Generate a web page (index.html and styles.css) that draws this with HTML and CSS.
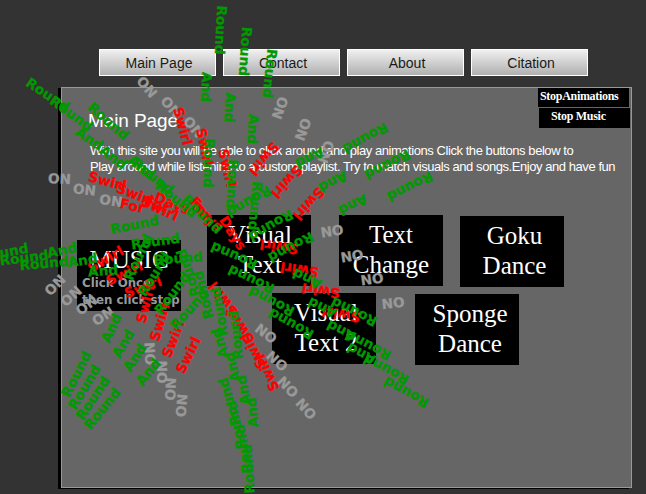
FILE: index.html
```html
<!DOCTYPE html>
<html lang="en">
<head>
<meta charset="utf-8">
<title>Main Page</title>
<link rel="stylesheet" href="styles.css">
</head>
<body>
<nav class="nav">
  <a>Main Page</a><a>Contact</a><a>About</a><a>Citation</a>
</nav>
<main class="panel">
  <div class="stops"><div class="stop">StopAnimations</div><div class="stop music-stop">Stop Music</div></div>
  <h1>Main Page</h1>
  <p class="intro"><span class="l1">With this site you will be able to click around and play animations Click the buttons below to</span><br><span class="l2">Play around while listening to a custom playlist. Try to match visuals and songs.Enjoy and have fun</span></p>
  <div class="tiles">
    <div class="tile music"><div class="label">MUSIC</div><div class="hint">Click Once<br>then click stop</div></div>
    <div class="grid">
      <div class="row">
        <div class="tile visual">Visual<br>Text</div>
        <div class="tile change">Text<br>Change</div>
        <div class="tile goku">Goku<br>Dance</div>
      </div>
      <div class="row second">
        <div class="tile visual-two">Visual<br>Text 2</div>
        <div class="tile sponge">Sponge<br>Dance</div>
      </div>
    </div>
  </div>
</main>
<svg class="words" width="646" height="494" viewBox="0 0 646 494">
<g class="on">
<text transform="translate(147 87) rotate(50)">ON</text>
<text transform="translate(171 107) rotate(50)">ON</text>
<text transform="translate(193.5 127) rotate(50)">ON</text>
<text transform="translate(280 108) rotate(110)">ON</text>
<text transform="translate(303 129.5) rotate(110)">ON</text>
<text transform="translate(326 152) rotate(110)">ON</text>
<text transform="translate(59.5 178.5) rotate(3)">ON</text>
<text transform="translate(84.5 189.5) rotate(6)">ON</text>
<text transform="translate(111 200.5) rotate(8)">ON</text>
<text transform="translate(55 285) rotate(-45)">ON</text>
<text transform="translate(71 296) rotate(-42)">ON</text>
<text transform="translate(86.5 305) rotate(-37)">ON</text>
<text transform="translate(103 316) rotate(-33)">ON</text>
<text transform="translate(150 353.5) rotate(-93)">ON</text>
<text transform="translate(161.5 372) rotate(-90)">ON</text>
<text transform="translate(170.5 389) rotate(-87)">ON</text>
<text transform="translate(181.5 405.5) rotate(-85)">ON</text>
<text transform="translate(266 333.5) rotate(217)">ON</text>
<text transform="translate(277 361) rotate(222)">ON</text>
<text transform="translate(288 387) rotate(227)">ON</text>
<text transform="translate(306 409) rotate(228)">ON</text>
<text transform="translate(332 231) rotate(171)">ON</text>
<text transform="translate(352 256) rotate(171)">ON</text>
<text transform="translate(372 279) rotate(172)">ON</text>
<text transform="translate(393 303) rotate(174)">ON</text>
</g>
<g class="swirl">
<text transform="translate(107.5 181) rotate(15)">Swirl</text>
<text transform="translate(135 194) rotate(21)">Swirl</text>
<text transform="translate(160 208.5) rotate(25)">Swirl</text>
<text transform="translate(132.5 205.5) rotate(12)">For</text>
<text transform="translate(157 204) rotate(20)">For</text>
<text transform="translate(172.5 203) rotate(22)">Days</text>
<text transform="translate(201 208) rotate(50)">For</text>
<text transform="translate(207 216) rotate(42)">Days</text>
<text transform="translate(233 233) rotate(57)">Days</text>
<text transform="translate(183 126) rotate(75)">Swirl</text>
<text transform="translate(205 147) rotate(78)">Swirl</text>
<text transform="translate(227.5 168) rotate(77)">Swirl</text>
<text transform="translate(264 159) rotate(130)">Swirl</text>
<text transform="translate(287 182) rotate(132)">Swirl</text>
<text transform="translate(309 204) rotate(132)">Swirl</text>
<text transform="translate(279 247) rotate(188)">Swirl</text>
<text transform="translate(299.5 270) rotate(188)">Swirl</text>
<text transform="translate(321 291) rotate(189)">Swirl</text>
<text transform="translate(341 314.5) rotate(190)">Swirl</text>
<text transform="translate(223 299) rotate(233)">Swirl</text>
<text transform="translate(240 326) rotate(236)">Swirl</text>
<text transform="translate(253 351) rotate(241)">Swirl</text>
<text transform="translate(267 373) rotate(246)">Swirl</text>
<text transform="translate(105.5 259) rotate(-30)">Swirl</text>
<text transform="translate(124.5 273) rotate(-25)">Swirl</text>
<text transform="translate(143 287) rotate(-20)">Swirl</text>
<text transform="translate(145 304) rotate(-77)">Swirl</text>
<text transform="translate(159.5 322) rotate(-73)">Swirl</text>
<text transform="translate(173 339) rotate(-68)">Swirl</text>
<text transform="translate(188 355) rotate(-64)">Swirl</text>
</g>
<g class="round">
<text transform="translate(221 30) rotate(93)">Round</text>
<text transform="translate(245.5 51.5) rotate(94)">Round</text>
<text transform="translate(270 73.5) rotate(96)">Round</text>
<text transform="translate(206.5 87) rotate(93)">And</text>
<text transform="translate(230 107.5) rotate(93)">And</text>
<text transform="translate(253 129) rotate(94)">And</text>
<text transform="translate(209 163) rotate(92)">Round</text>
<text transform="translate(232.5 184) rotate(93)">Round</text>
<text transform="translate(255.5 206) rotate(95)">Round</text>
<text transform="translate(48 94.5) rotate(34)">Round</text>
<text transform="translate(71.5 113.5) rotate(36)">Round</text>
<text transform="translate(108.5 121) rotate(41)">Round</text>
<text transform="translate(89.5 138.5) rotate(34)">And</text>
<text transform="translate(113.5 157) rotate(36)">And</text>
<text transform="translate(142 167) rotate(38)">And</text>
<text transform="translate(153 176) rotate(38)">Round</text>
<text transform="translate(176.5 199) rotate(39)">Round</text>
<text transform="translate(202.5 214) rotate(44)">Round</text>
<text transform="translate(310 158) rotate(153)">And</text>
<text transform="translate(333 182) rotate(153)">And</text>
<text transform="translate(353 205) rotate(153)">And</text>
<text transform="translate(365.5 138.5) rotate(151)">Round</text>
<text transform="translate(387.5 165) rotate(153)">Round</text>
<text transform="translate(410 187) rotate(153)">Round</text>
<text transform="translate(249 202) rotate(150)">Round</text>
<text transform="translate(271 226) rotate(150)">Round</text>
<text transform="translate(291 247.5) rotate(152)">Round</text>
<text transform="translate(234 256) rotate(203)">Round</text>
<text transform="translate(251 279.5) rotate(205)">Round</text>
<text transform="translate(271.5 301.5) rotate(207)">Round</text>
<text transform="translate(291 324) rotate(209)">Round</text>
<text transform="translate(307 279) rotate(205)">And</text>
<text transform="translate(322 308) rotate(206)">And</text>
<text transform="translate(341 331) rotate(207)">And</text>
<text transform="translate(361 354) rotate(208)">And</text>
<text transform="translate(354 312) rotate(206)">Round</text>
<text transform="translate(368 345.5) rotate(207)">Round</text>
<text transform="translate(386 369.5) rotate(208)">Round</text>
<text transform="translate(406 392.5) rotate(209)">Round</text>
<text transform="translate(134.5 224.5) rotate(-11)">Round</text>
<text transform="translate(155.5 241) rotate(-8)">Round</text>
<text transform="translate(178 258) rotate(-4)">Round</text>
<text transform="translate(4 252) rotate(-10)">Round</text>
<text transform="translate(24 257.5) rotate(-7)">Round</text>
<text transform="translate(44 263) rotate(-5)">Round</text>
<text transform="translate(62 250) rotate(-12)">And</text>
<text transform="translate(82.5 260) rotate(-9)">And</text>
<text transform="translate(103 270.5) rotate(-4)">And</text>
<text transform="translate(138 257) rotate(-65)">Round</text>
<text transform="translate(154 274) rotate(-58)">Round</text>
<text transform="translate(172 293) rotate(-53)">Round</text>
<text transform="translate(189 309) rotate(-48)">Round</text>
<text transform="translate(188 273) rotate(-108)">Round</text>
<text transform="translate(203 295) rotate(-103)">Round</text>
<text transform="translate(219 312) rotate(-99)">Round</text>
<text transform="translate(235.5 335) rotate(-96)">Round</text>
<text transform="translate(219.5 343) rotate(-107)">And</text>
<text transform="translate(232 367) rotate(-103)">And</text>
<text transform="translate(243 390) rotate(-99)">And</text>
<text transform="translate(252 412.5) rotate(-95)">And</text>
<text transform="translate(229 402) rotate(-106)">Round</text>
<text transform="translate(236 425) rotate(-102)">Round</text>
<text transform="translate(243 449) rotate(-99)">Round</text>
<text transform="translate(248 469) rotate(-94)">Round</text>
<text transform="translate(76 374) rotate(-63)">Round</text>
<text transform="translate(84 387) rotate(-59)">Round</text>
<text transform="translate(92.5 398) rotate(-56)">Round</text>
<text transform="translate(102 408.5) rotate(-51)">Round</text>
<text transform="translate(111 328) rotate(-65)">And</text>
<text transform="translate(123 343.5) rotate(-60)">And</text>
<text transform="translate(134.5 357.5) rotate(-56)">And</text>
<text transform="translate(148 372) rotate(-51)">And</text>
</g>
</svg>
</body>
</html>
```
FILE: styles.css
```css
html, body {
  margin: 0;
  height: 494px;
  overflow: hidden;
}
body {
  position: relative;
  background: #333;
  font-family: "Liberation Sans", Arial, sans-serif;
}
.nav {
  display: flex;
  gap: 7px;
  padding: 49px 0 0 99px;
  margin-bottom: 11px;
}
.nav a {
  box-sizing: border-box;
  width: 117px;
  height: 27px;
  padding-left: 3px;
  border: 1px solid #fff;
  background: linear-gradient(#f0f0f0, #b0b0b0);
  color: #1a1a1a;
  font-size: 14px;
  line-height: 26px;
  text-align: center;
}
.panel {
  box-sizing: border-box;
  width: 571px;
  height: 401px;
  margin-left: 61px;
  border: 1px solid #999;
  background: #666;
  box-shadow: -3px 1px 0 #000;
  color: #fff;
}
.stops {
  float: right;
  width: 93px;
}
.stop {
  box-sizing: border-box;
  width: 91px;
  height: 19px;
  padding-left: 2px;
  background: #000;
  font: bold 12px/17px "Liberation Serif", serif;
  letter-spacing: -0.3px;
  white-space: nowrap;
}
.music-stop {
  height: 20px;
  margin: 1px 0 0 1px;
  padding-left: 12px;
}
h1 {
  margin: 0;
  padding: 20px 0 0 26px;
  font-size: 19px;
  font-weight: normal;
  letter-spacing: -0.1px;
  line-height: 26px;
}
.intro {
  margin: 9px 0 0 28px;
  font-size: 13px;
  line-height: 16px;
  letter-spacing: -0.44px;
  white-space: nowrap;
}
.tiles {
  display: flex;
  margin: 40px 0 0 15px;
}
.tile {
  box-sizing: border-box;
  width: 104px;
  height: 71px;
  padding-top: 5px;
  background: #000;
  font: 25px/30px "Liberation Serif", serif;
  text-align: center;
}
.music {
  margin-top: 25px;
}
.hint {
  margin-left: 5px;
  color: #999;
  font: bold 11.8px/17px "DejaVu Sans", sans-serif;
  text-align: left;
  white-space: nowrap;
}
.music .label {
  height: 30px;
  line-height: 30px;
}
.row {
  display: flex;
}
.visual {
  margin-left: 26px;
  padding-left: 2px;
}
.change {
  margin-left: 28px;
}
.goku {
  margin: 1px 0 0 17px;
  padding-left: 5px;
}
.second {
  margin: 6px 0 0 91px;
}
.visual-two {
  padding-left: 4px;
}
.sponge {
  margin: 1px 0 0 39px;
  padding-left: 6px;
}
.words {
  position: absolute;
  left: 0;
  top: 0;
  font: bold 13.7px "DejaVu Sans", Verdana, sans-serif;
}
.words text {
  text-anchor: middle;
  dominant-baseline: central;
  stroke-width: 0.25px;
}
.on { fill: #999; stroke: #999; }
.swirl { fill: #f00; stroke: #f00; }
.round { fill: #090; stroke: #090; }
```
